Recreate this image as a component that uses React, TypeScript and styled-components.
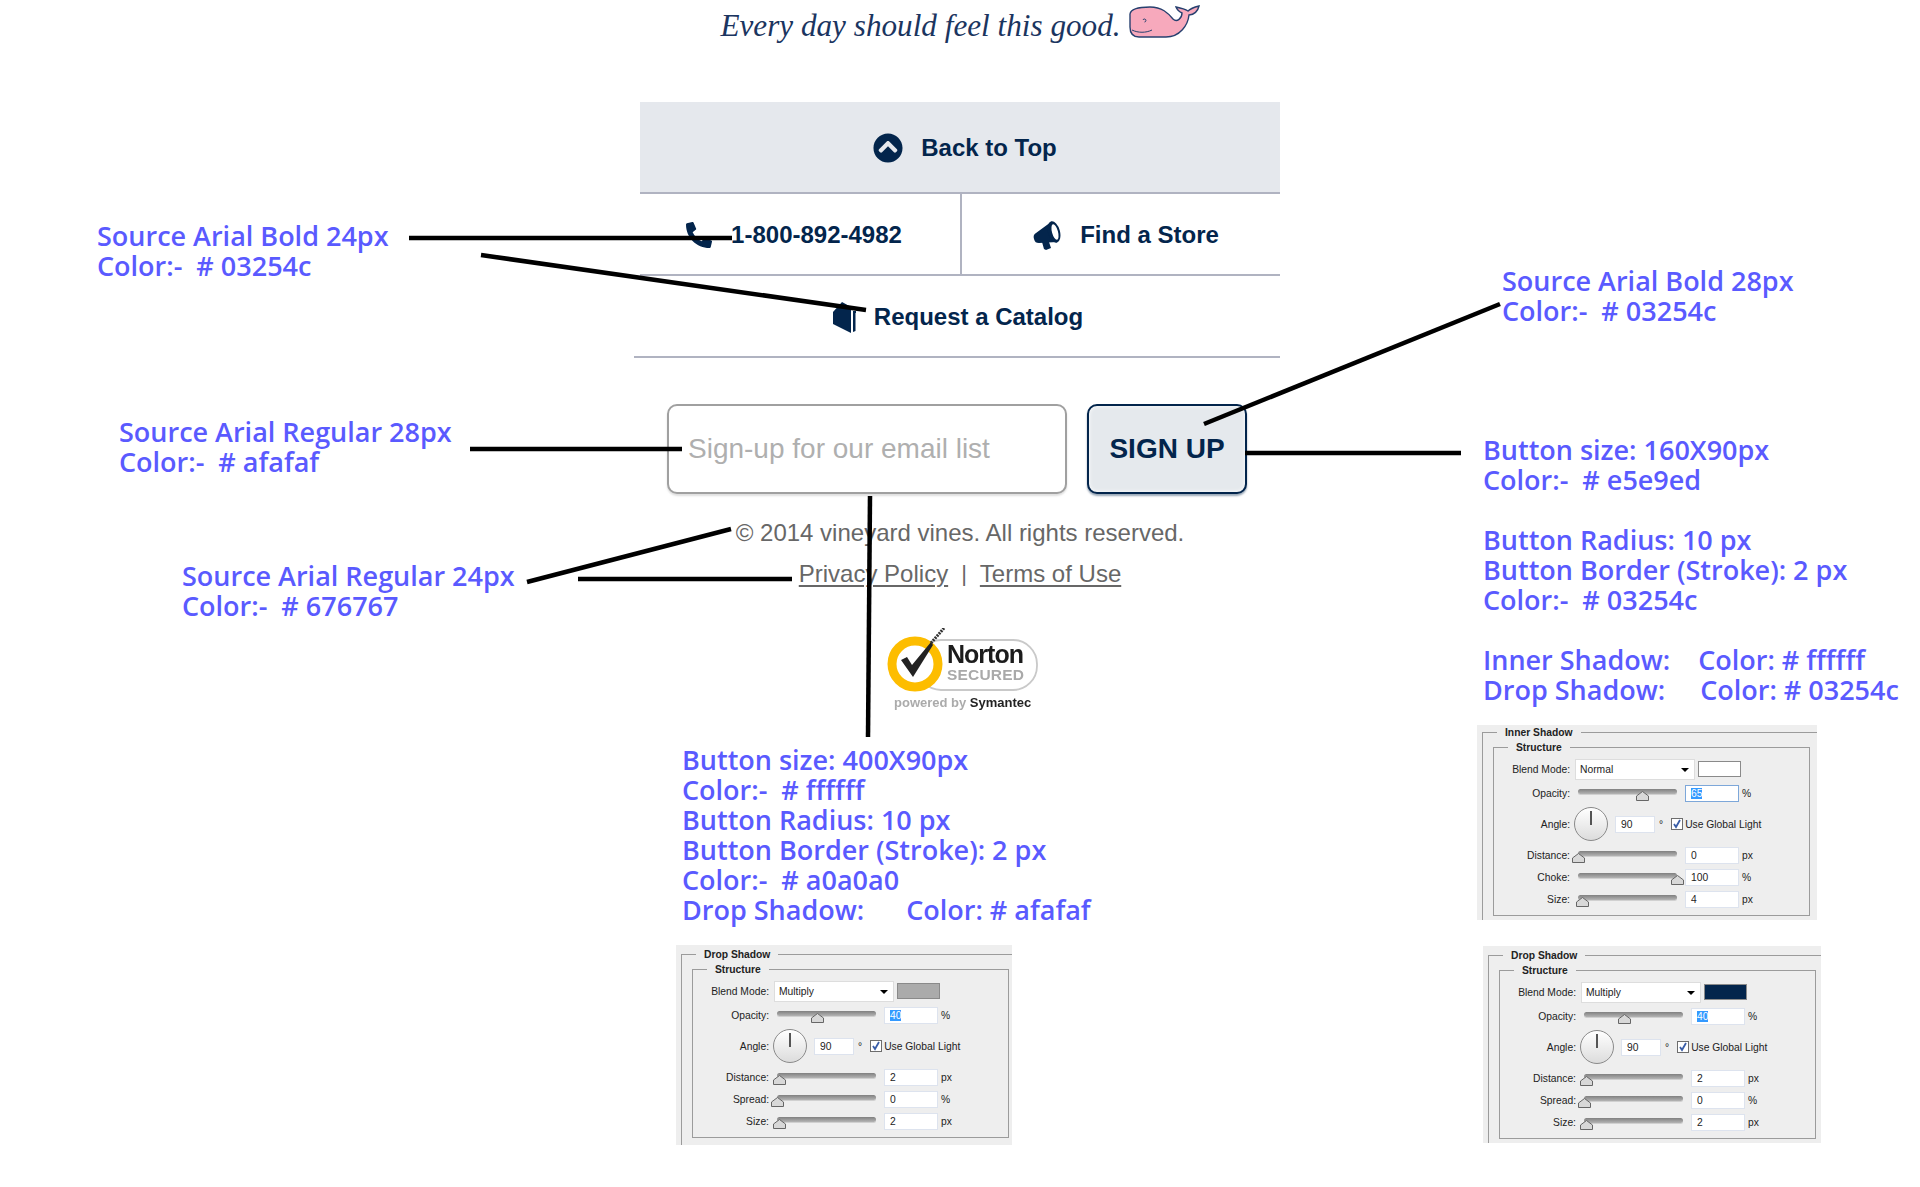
import React from 'react';
import styled, { createGlobalStyle } from 'styled-components';
import { FaChevronCircleUp, FaPhoneAlt } from 'react-icons/fa';

const GlobalStyle = createGlobalStyle`
	html, body {
		margin: 0;
		padding: 0;
		background: #ffffff;
	}
`;

const NAVY = '#03254c';
const NOTE = '#5a5aff';

// leader lines of the spec sheet: x1, y1, x2, y2
const leaders = [
	[409, 238, 732, 238],
	[481, 255, 866, 310],
	[470, 449, 682, 449],
	[527, 582, 731, 529],
	[578, 579, 792, 579],
	[870, 496, 868, 737],
	[1204, 424, 1500, 304],
	[1245, 453, 1461, 453],
];

interface ShadowRow {
	label: string;
	height: number;
	at: number;
	value: string;
	unit: string;
	selected?: boolean;
	focused?: boolean;
}

interface ShadowPanelProps {
	x: number;
	y: number;
	top: number;
	width: number;
	height: number;
	title: string;
	blend: string;
	swatch: string;
	rows: ShadowRow[];
}

const dropRows = (): ShadowRow[] => [
	{ label: 'Opacity:', height: 24, at: 40, value: '40', unit: '%', selected: true },
	{ label: 'Distance:', height: 24, at: 2, value: '2', unit: 'px' },
	{ label: 'Spread:', height: 20, at: 0, value: '0', unit: '%' },
	{ label: 'Size:', height: 24, at: 2, value: '2', unit: 'px' },
];

const innerRows = (): ShadowRow[] => [
	{ label: 'Opacity:', height: 24, at: 65, value: '65', unit: '%', selected: true, focused: true },
	{ label: 'Distance:', height: 24, at: 0, value: '0', unit: 'px' },
	{ label: 'Choke:', height: 20, at: 100, value: '100', unit: '%' },
	{ label: 'Size:', height: 24, at: 4, value: '4', unit: 'px' },
];

const SliderRow = ({ row }: { row: ShadowRow }) => (
	<PanelRow $height={row.height}>
		<RowLabel>{row.label}</RowLabel>
		<Track>
			<Thumb $at={row.at} viewBox="0 0 13 10">
				<path d="M6.5 .5 L12.5 5 V9.5 H.5 V5 Z" fill="#d8d8d8" stroke="#666" />
			</Thumb>
		</Track>
		<NumberBox $focused={row.focused}>{row.selected ? <Selected>{row.value}</Selected> : row.value}</NumberBox>
		<Unit>{row.unit}</Unit>
	</PanelRow>
);

const ShadowPanel = ({ x, y, top, width, height, title, blend, swatch, rows }: ShadowPanelProps) => (
	<Panel $x={x} $y={y} $top={top} $width={width} $height={height}>
		<OuterGroup>
			<OuterLegend>{title}</OuterLegend>
			<InnerGroup>
				<InnerLegend>Structure</InnerLegend>
				<PanelRow $height={24}>
					<RowLabel>Blend Mode:</RowLabel>
					<BlendSelect>
						{blend}
						<Caret />
					</BlendSelect>
					<Swatch $color={swatch} />
				</PanelRow>
				<SliderRow row={rows[0]} />
				<PanelRow $height={38}>
					<RowLabel>Angle:</RowLabel>
					<Dial>
						<Needle />
					</Dial>
					<AngleBox>90</AngleBox>
					<Degree>°</Degree>
					<GlobalCheck>
						<svg width="10" height="10" viewBox="0 0 10 10">
							<path d="M2 5 L4 8 L8 1" fill="none" stroke="#3a5ea8" strokeWidth="1.8" />
						</svg>
					</GlobalCheck>
					<CheckLabel>Use Global Light</CheckLabel>
				</PanelRow>
				{rows.slice(1).map((row) => (
					<SliderRow key={row.label} row={row} />
				))}
			</InnerGroup>
		</OuterGroup>
	</Panel>
);

const App = () => {
	return (
		<Sheet>
			<GlobalStyle />
			<Column>
				<Tagline>
					Every day should feel this good.
					<svg width="72" height="36" viewBox="0 0 72 36">
						<path
							d="M2 10 C3 4 12 3 22 3 C34 3 40 9 45 15 C49 19 54 14 54 9 C52 8 49 6 48 3 C53 4 57 5 60 7 C63 4 67 3 71 2 C70 7 66 11 61 11 C60 21 52 33 38 33 L11 33 C5 33 2 29 2 23 Z"
							fill="#f7a9bc"
							stroke="#27406f"
							strokeWidth="1.4"
						/>
						<path d="M4 26 C10 29 18 29 24 26" fill="none" stroke="#27406f" strokeWidth="1" />
						<path d="M15 16 a1.5 1.5 0 1 1 1.5 2" fill="none" stroke="#27406f" strokeWidth="1" />
					</svg>
				</Tagline>

				<BackToTop>
					<FaChevronCircleUp size={30} />
					Back to Top
				</BackToTop>

				<SplitRow>
					<SplitCell $shift={-6}>
						<FaPhoneAlt size={26} style={{ transform: 'scaleX(-1) rotate(-90deg)' }} />
						1-800-892-4982
					</SplitCell>
					<SplitCell $shift={5} $divided>
						<svg width="28" height="29" viewBox="0 0 28 29" fill={NAVY}>
							<path d="M1 18 C0 15 1 13 3 12 L18 1 L24 21 L6 22 C3 22 2 21 1 18 Z" />
							<path d="M9 21 L16 21 L18 27 L13 29 L11 28 Z" />
							<ellipse cx="21" cy="11" rx="6" ry="11" transform="rotate(-15 21 11)" />
							<ellipse cx="22" cy="11" rx="3" ry="8" transform="rotate(-15 22 11)" fill="#fff" />
						</svg>
						Find a Store
					</SplitCell>
				</SplitRow>

				<CatalogRow>
					<svg width="23" height="32" viewBox="0 0 23 32" fill={NAVY}>
						<path d="M0 11 L9 1 L18 6 V32 L0 23 Z" />
						<path d="M20 10 H23 V12 H22.5 V30 L20 31 Z" />
					</svg>
					Request a Catalog
				</CatalogRow>

				<SignupRow>
					<EmailInput placeholder="Sign-up for our email list" readOnly />
					<SignupButton>SIGN UP</SignupButton>
				</SignupRow>

				<Copyright>© 2014 vineyard vines. All rights reserved.</Copyright>
				<LegalLinks>
					<LegalLink href="#">Privacy Policy</LegalLink>
					<LegalBar>|</LegalBar>
					<LegalLink href="#">Terms of Use</LegalLink>
				</LegalLinks>

				<NortonBadge width="152" height="84" viewBox="0 0 152 84">
					<rect x="30" y="12" width="120" height="50" rx="24" fill="none" stroke="#c9c9c9" strokeWidth="1.8" />
					<circle cx="28" cy="36" r="23" fill="#fff" stroke="#fdbd00" strokeWidth="9" />
					<path d="M14 32 L20 29 L25 37 L44 14 L46 17 L26 49 Z" fill="#222" />
					<path d="M44 15 L57 0" stroke="#333" strokeWidth="3" strokeDasharray="2 1" />
					<text x="60" y="35" fontFamily="Liberation Sans" fontWeight="700" fontSize="25" letterSpacing="-1" fill="#1c1c1c">
						Norton
					</text>
					<text x="60" y="52" fontFamily="Liberation Sans" fontWeight="700" fontSize="15.5" letterSpacing=".2" fill="#a9a9a9">
						SECURED
					</text>
					<text x="7" y="79" fontFamily="Liberation Sans" fontWeight="700" fontSize="13" fill="#ababab">
						powered by <tspan fill="#222">Symantec</tspan>
					</text>
				</NortonBadge>
			</Column>

			<Note $x={97} $y={221}>
				Source Arial Bold 24px
				<br />
				Color:- &nbsp;# 03254c
			</Note>
			<Note $x={1502} $y={266}>
				Source Arial Bold 28px
				<br />
				Color:- &nbsp;# 03254c
			</Note>
			<Note $x={119} $y={417}>
				Source Arial Regular 28px
				<br />
				Color:- &nbsp;# afafaf
			</Note>
			<Note $x={182} $y={561}>
				Source Arial Regular 24px
				<br />
				Color:- &nbsp;# 676767
			</Note>
			<Note $x={1483} $y={435}>
				Button size: 160X90px
				<br />
				Color:- &nbsp;# e5e9ed
				<NoteGap />
				Button Radius: 10 px
				<br />
				Button Border (Stroke): 2 px
				<br />
				Color:- &nbsp;# 03254c
				<NoteGap />
				Inner Shadow: &nbsp;&nbsp;&nbsp;Color: # ffffff
				<br />
				Drop Shadow: &nbsp;&nbsp;&nbsp;&nbsp;Color: # 03254c
			</Note>
			<Note $x={682} $y={745}>
				Button size: 400X90px
				<br />
				Color:- &nbsp;# ffffff
				<br />
				Button Radius: 10 px
				<br />
				Button Border (Stroke): 2 px
				<br />
				Color:- &nbsp;# a0a0a0
				<br />
				Drop Shadow: &nbsp;&nbsp;&nbsp;&nbsp;&nbsp;Color: # afafaf
			</Note>

			<ShadowPanel x={1477} y={725} top={7} width={340} height={195} title="Inner Shadow" blend="Normal" swatch="#ffffff" rows={innerRows()} />
			<ShadowPanel x={676} y={945} top={9} width={336} height={200} title="Drop Shadow" blend="Multiply" swatch="#ababab" rows={dropRows()} />
			<ShadowPanel x={1483} y={946} top={9} width={338} height={197} title="Drop Shadow" blend="Multiply" swatch="#03254c" rows={dropRows()} />

			<Leaders width="1920" height="1187" viewBox="0 0 1920 1187">
				{leaders.map(([x1, y1, x2, y2]) => (
					<line key={`${x1}-${y1}`} x1={x1} y1={y1} x2={x2} y2={y2} stroke="#000" strokeWidth="4.5" />
				))}
			</Leaders>
		</Sheet>
	);
};

const Sheet = styled.div`
	position: relative;
	width: 1920px;
	height: 1187px;
	overflow: hidden;
	font-family: 'Liberation Sans', Arial, sans-serif;
`;

const Column = styled.div`
	width: 640px;
	margin: 0 auto;
	display: flex;
	flex-direction: column;
	align-items: stretch;
`;

const Tagline = styled.div`
	height: 102px;
	display: flex;
	justify-content: center;
	align-items: flex-start;
	gap: 7px;
	font-family: 'Liberation Serif', Georgia, serif;
	font-style: italic;
	font-size: 31.2px;
	line-height: 52px;
	color: #1b3560;

	svg {
		margin-top: 4px;
	}
`;

const NavRow = styled.div`
	box-sizing: border-box;
	display: flex;
	align-items: center;
	justify-content: center;
	padding-top: 2px;
	border-bottom: 2px solid #b0b3c1;
	font-size: 24px;
	font-weight: 700;
	color: ${NAVY};
`;

const BackToTop = styled(NavRow)`
	height: 92px;
	gap: 18px;
	padding-left: 10px;
	background: #e5e8ed;
`;

const SplitRow = styled(NavRow)`
	height: 82px;
	align-items: stretch;
	padding-top: 0;
`;

const SplitCell = styled.div<{ $shift: number; $divided?: boolean }>`
	box-sizing: border-box;
	flex: 0 0 50%;
	display: flex;
	align-items: center;
	justify-content: center;
	gap: 19px;
	padding-top: 2px;
	padding-left: ${(p) => (p.$shift > 0 ? p.$shift * 2 : 0)}px;
	padding-right: ${(p) => (p.$shift < 0 ? -p.$shift * 2 : 0)}px;
	border-left: ${(p) => (p.$divided ? '2px solid #b0b3c1' : 'none')};
`;

const CatalogRow = styled(NavRow)`
	height: 82px;
	gap: 18px;
	padding-left: 2px;
	margin-left: -6px;
`;

const SignupRow = styled.div`
	display: flex;
	gap: 20px;
	margin-top: 46px;
	padding-left: 27px;
`;

const EmailInput = styled.input`
	box-sizing: border-box;
	width: 400px;
	height: 90px;
	padding: 0 19px;
	background: #ffffff;
	border: 2px solid #a0a0a0;
	border-radius: 10px;
	box-shadow: 0 2px 2px rgba(175, 175, 175, 0.4);
	outline: none;
	font-family: 'Liberation Sans', Arial, sans-serif;
	font-size: 28px;

	&::placeholder {
		color: #afafaf;
		opacity: 1;
	}
`;

const SignupButton = styled.button`
	box-sizing: border-box;
	width: 160px;
	height: 90px;
	padding: 0;
	background: #e5e9ed;
	border: 2px solid ${NAVY};
	border-radius: 10px;
	box-shadow: inset 0 0 4px #ffffff, 0 2px 2px rgba(3, 37, 76, 0.4);
	font-family: 'Liberation Sans', Arial, sans-serif;
	font-size: 28px;
	font-weight: 700;
	color: ${NAVY};
`;

const Copyright = styled.div`
	margin-top: 24px;
	text-align: center;
	font-size: 24px;
	line-height: 30px;
	color: #676767;
`;

const LegalLinks = styled.div`
	margin-top: 11px;
	display: flex;
	justify-content: center;
	gap: 13px;
	font-size: 24px;
	line-height: 30px;
	color: #676767;
`;

const LegalLink = styled.a`
	color: inherit;
	text-decoration: underline;
	text-underline-offset: 3px;
`;

const LegalBar = styled.span`
	font-size: 22px;
`;

const NortonBadge = styled.svg`
	align-self: center;
	margin-top: 39px;
	margin-left: 6px;
	filter: blur(0.4px);
`;

const Note = styled.div<{ $x: number; $y: number }>`
	position: absolute;
	left: ${(p) => p.$x}px;
	top: ${(p) => p.$y}px;
	font-family: 'Open Sans', 'Noto Sans', sans-serif;
	font-weight: 600;
	font-size: 27px;
	line-height: 30px;
	white-space: nowrap;
	color: ${NOTE};
`;

const NoteGap = styled.div`
	height: 30px;
`;

const Leaders = styled.svg`
	position: absolute;
	left: 0;
	top: 0;
	pointer-events: none;
`;

const Panel = styled.div<{ $x: number; $y: number; $top: number; $width: number; $height: number }>`
	position: absolute;
	left: ${(p) => p.$x}px;
	top: ${(p) => p.$y}px;
	width: ${(p) => p.$width}px;
	height: ${(p) => p.$height}px;
	box-sizing: border-box;
	padding: ${(p) => p.$top}px 0 0 5px;
	background: #eeeeee;
	overflow: hidden;
	font-family: 'Liberation Sans', Arial, sans-serif;
	font-size: 10.3px;
	color: #222222;
`;

const OuterGroup = styled.div`
	position: relative;
	height: 100%;
	box-sizing: border-box;
	padding: 14px 0 0 10px;
	border-top: 1px solid #9b9b9b;
	border-left: 1px solid #9b9b9b;
`;

const OuterLegend = styled.span`
	position: absolute;
	left: 14px;
	top: -7px;
	padding: 0 8px;
	background: #eeeeee;
	font-weight: 700;
	line-height: 13px;
`;

const InnerGroup = styled.div`
	position: relative;
	width: 317px;
	box-sizing: border-box;
	height: 169px;
	padding-top: 9px;
	border: 1px solid #9b9b9b;
`;

const InnerLegend = styled.span`
	position: absolute;
	left: 14px;
	top: -7px;
	padding: 0 8px;
	background: #eeeeee;
	font-weight: 700;
	line-height: 13px;
`;

const PanelRow = styled.div<{ $height: number }>`
	display: flex;
	align-items: center;
	height: ${(p) => p.$height}px;
`;

const RowLabel = styled.span`
	width: 76px;
	flex: none;
	text-align: right;
`;

const BlendSelect = styled.div`
	position: relative;
	width: 120px;
	height: 21px;
	margin-left: 5px;
	padding-left: 4px;
	box-sizing: border-box;
	display: flex;
	align-items: center;
	background: #ffffff;
	border: 1px solid #dddddd;
`;

const Caret = styled.i`
	position: absolute;
	right: 5px;
	top: 8px;
	border-left: 4px solid transparent;
	border-right: 4px solid transparent;
	border-top: 4px solid #000000;
`;

const Swatch = styled.div<{ $color: string }>`
	width: 43px;
	height: 16px;
	margin-left: 3px;
	box-sizing: border-box;
	background: ${(p) => p.$color};
	border: 1px solid #8a8a8a;
`;

const Track = styled.div`
	position: relative;
	width: 99px;
	height: 5px;
	margin: 0 8px 3px 8px;
	background: linear-gradient(#808080, #b4b4b4);
	border-radius: 3px;
	box-shadow: 0 1px 0 #d0d0d0;
`;

const Thumb = styled.svg<{ $at: number }>`
	position: absolute;
	left: ${(p) => p.$at}%;
	top: 2px;
	width: 13px;
	height: 10px;
	margin-left: -6px;
`;

const NumberBox = styled.div<{ $focused?: boolean }>`
	width: 54px;
	height: 17px;
	box-sizing: border-box;
	padding-left: 5px;
	display: flex;
	align-items: center;
	background: #ffffff;
	border: 1px solid ${(p) => (p.$focused ? '#7da7d9' : '#dde3ee')};
`;

const Selected = styled.span`
	background: #3399ff;
	color: #ffffff;
`;

const Unit = styled.span`
	margin-left: 3px;
`;

const Dial = styled.div`
	position: relative;
	width: 34px;
	height: 34px;
	margin-left: 4px;
	box-sizing: border-box;
	border: 1px solid #8a8a8a;
	border-radius: 50%;
	background: linear-gradient(#ffffff, #dcdcdc);
`;

const Needle = styled.i`
	position: absolute;
	left: 15px;
	top: 3px;
	width: 1.5px;
	height: 14px;
	background: #555555;
`;

const AngleBox = styled(NumberBox)`
	width: 40px;
	margin-left: 7px;
`;

const Degree = styled.span`
	margin-left: 4px;
`;

const GlobalCheck = styled.div`
	width: 12px;
	height: 12px;
	margin-left: 8px;
	box-sizing: border-box;
	display: flex;
	align-items: center;
	justify-content: center;
	background: #ffffff;
	border: 1px solid #6d6d6d;
`;

const CheckLabel = styled.span`
	margin-left: 2px;
`;

export default App;
